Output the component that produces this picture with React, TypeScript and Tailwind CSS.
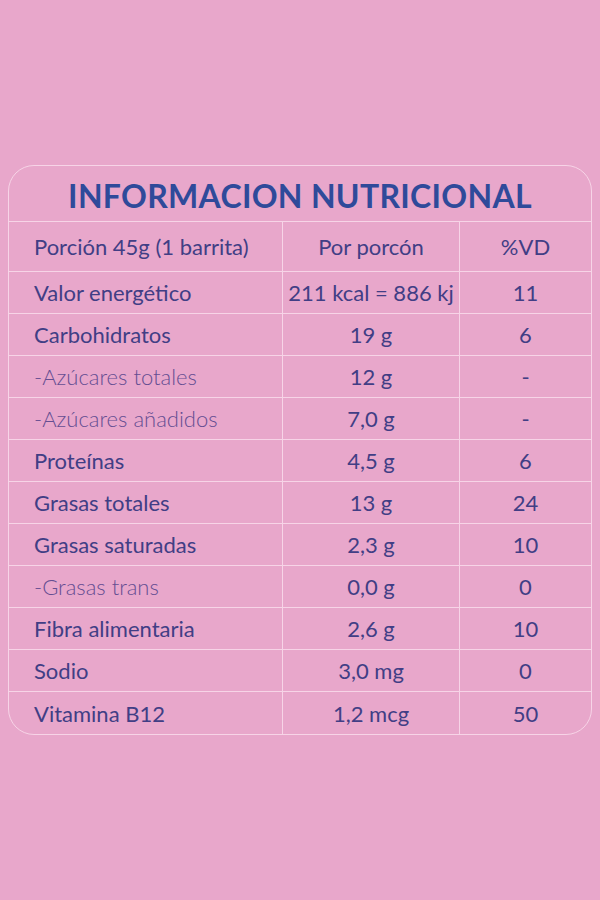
import React from "react";

type Row = { label: string; amount: string; vd: string; sub?: boolean };

const rows: Row[] = [
  { label: "Valor energético", amount: "211 kcal = 886 kj", vd: "11" },
  { label: "Carbohidratos", amount: "19 g", vd: "6" },
  { label: "-Azúcares totales", amount: "12 g", vd: "-", sub: true },
  { label: "-Azúcares añadidos", amount: "7,0 g", vd: "-", sub: true },
  { label: "Proteínas", amount: "4,5 g", vd: "6" },
  { label: "Grasas totales", amount: "13 g", vd: "24" },
  { label: "Grasas saturadas", amount: "2,3 g", vd: "10" },
  { label: "-Grasas trans", amount: "0,0 g", vd: "0", sub: true },
  { label: "Fibra alimentaria", amount: "2,6 g", vd: "10" },
  { label: "Sodio", amount: "3,0 mg", vd: "0" },
  { label: "Vitamina B12", amount: "1,2 mcg", vd: "50" },
];

export default function App() {
  return (
    <div
      className="w-[600px] h-[900px] bg-[#e8a7cb] pt-[165px] px-[8px]"
      style={{ fontFamily: "Lato, 'Open Sans', sans-serif" }}
    >
      <div className="w-[584px] border-[1.5px] border-[#f7d4e7] rounded-[26px] overflow-hidden">
        <div className="h-[56px] flex items-center justify-center border-b-[1.5px] border-[#f7d4e7]">
          <span className="text-[32px] font-bold text-[#2f4a9a] tracking-[0.3px] mt-[4px]">
            INFORMACION NUTRICIONAL
          </span>
        </div>
        <div className="grid grid-cols-[274px_177px_1fr] h-[50px] border-b-[1.5px] border-[#f7d4e7] text-[22px] text-[#413e85]">
          <div className="flex items-center pl-[25px] border-r-[1.5px] border-[#f7d4e7]">Porción 45g (1 barrita)</div>
          <div className="flex items-center justify-center border-r-[1.5px] border-[#f7d4e7]">Por porcón</div>
          <div className="flex items-center justify-center">%VD</div>
        </div>
        {rows.map((r, i) => (
          <div
            key={r.label}
            className={
              "grid grid-cols-[274px_177px_1fr] h-[42px] text-[22px] text-[#413e85] " +
              (i < rows.length - 1 ? "border-b-[1.5px] border-[#f7d4e7]" : "")
            }
          >
            <div
              className={
                "flex items-center pl-[25px] border-r-[1.5px] border-[#f7d4e7] " +
                (r.sub ? "font-light text-[#654e92]" : "")
              }
            >
              {r.label}
            </div>
            <div className="flex items-center justify-center border-r-[1.5px] border-[#f7d4e7]">{r.amount}</div>
            <div className="flex items-center justify-center">{r.vd}</div>
          </div>
        ))}
      </div>
    </div>
  );
}
